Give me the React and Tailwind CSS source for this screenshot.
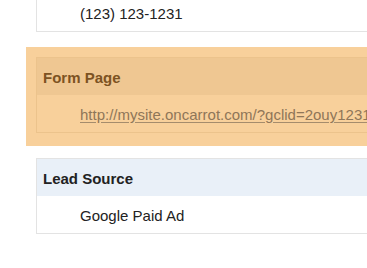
const font = { fontFamily: '"Liberation Sans", Arial, sans-serif' };

function Card({ title, children, headerClass = "bg-[#e9f0f8] text-[#222]", borderClass = "border-[#e3e3e3]", bodyClass = "" }) {
  return (
    <div className={`border ${borderClass}`}>
      {title && (
        <div className={`h-[37px] flex items-center pl-[6px] pt-[3px] text-[15px] font-bold ${headerClass}`}>
          {title}
        </div>
      )}
      <div className={`h-[37px] flex items-center pl-[43px] pt-[3px] text-[15px] ${bodyClass}`}>
        {children}
      </div>
    </div>
  );
}

export default function App() {
  return (
    <div className="w-[367px] h-[268px] overflow-hidden bg-white" style={font}>
      <div className="w-[480px] -mt-[7px]">
        <div className="pl-[36px]">
          <Card bodyClass="text-[#222]">(123) 123-1231</Card>
        </div>

        <div className="mt-[15px] ml-[26px] bg-[#f8d09b] pl-[10px] pt-[10px] pb-[13px]">
          <Card
            title="Form Page"
            headerClass="bg-[#efc792] text-[#7d5322]"
            borderClass="border-[#ecc38c]"
            bodyClass="text-[#8f7658]"
          >
            <a href="#" className="underline underline-offset-[2px] decoration-[#a58c6c]">
              http://mysite.oncarrot.com/?gclid=2ouy1231ajsdf
            </a>
          </Card>
        </div>

        <div className="mt-[12px] pl-[36px]">
          <Card title="Lead Source" bodyClass="text-[#222]">Google Paid Ad</Card>
        </div>
      </div>
    </div>
  );
}
